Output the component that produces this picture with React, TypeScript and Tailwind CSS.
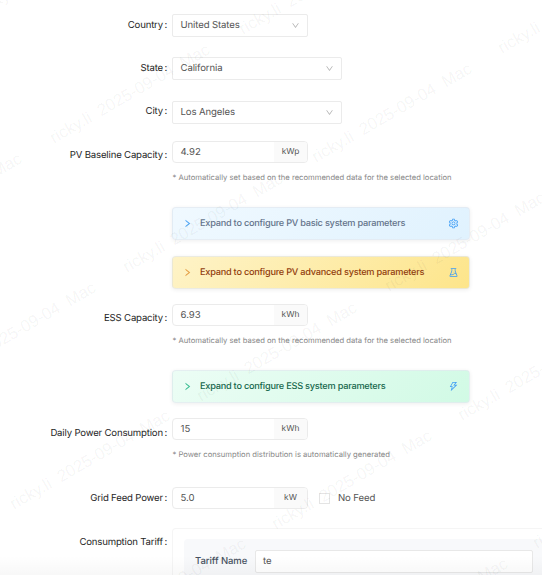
import type { ReactNode } from 'react';
import {
  AiOutlineDown,
  AiOutlineExperiment,
  AiOutlineRight,
  AiOutlineSetting,
  AiOutlineThunderbolt,
} from 'react-icons/ai';

function Row({ label, pad, height, children }: { label: string; pad: string; height: string; children: ReactNode }) {
  return (
    <div className={`flex items-start ${height}`}>
      <div className={`w-[172px] shrink-0 pr-[5px] text-right text-[9.6px] leading-[14px] tracking-[-0.18px] text-[#262626] ${pad}`}>
        {label}
        <span className="ml-[1.5px]">:</span>
      </div>
      <div className="min-w-0 flex-1">{children}</div>
    </div>
  );
}

function Select({ value, width }: { value: string; width: string }) {
  return (
    <div className={`flex h-[23px] items-center justify-between rounded-[2px] border border-[#ebebeb] bg-white pr-[7px] pl-[7.5px] text-[9.6px] tracking-[-0.12px] text-[#555555] ${width}`}>
      <span className="pt-[2px]">{value}</span>
      <AiOutlineDown className="size-[9px] text-[#b0b0b0]" />
    </div>
  );
}

function UnitInput({ value, unit }: { value: string; unit: string }) {
  return (
    <div className="flex h-[22px] w-[136px] overflow-hidden rounded-[4px] border border-[#ebebeb] bg-white text-[9.6px] text-[#555555]">
      <div className="flex flex-1 items-center pt-[2px] pl-[7.5px]">{value}</div>
      <div className="flex w-[33px] items-center justify-center bg-[#fafafa] text-[8.4px]">{unit}</div>
    </div>
  );
}

function Note({ children }: { children: ReactNode }) {
  return <p className="mt-[9px] pl-[0.5px] text-[7.65px] leading-[12px] whitespace-nowrap text-[#888888]">{children}</p>;
}

function Banner({ text, tone, arrow, icon }: { text: string; tone: string; arrow: string; icon: ReactNode }) {
  return (
    <div className={`flex h-[33px] w-[298px] items-center rounded-[4px] border border-[#e2e8f0]/70 pr-[10px] pl-[10px] text-[9.2px] font-medium shadow-[0_1px_4px_rgba(0,0,0,0.07)] ${tone}`}>
      <AiOutlineRight className={`mr-[8px] size-[9px] shrink-0 [stroke-width:30] ${arrow}`} />
      <span className="flex-1 tracking-[-0.24px] whitespace-nowrap">{text}</span>
      <span className="text-[11px] text-[#3b9bf5]">{icon}</span>
    </div>
  );
}

// Centre points of the repeated watermark
const marks = [
  [57, -34], [319, -15], [578, 4], [130, 94], [392, 113], [-58, 203],
  [203, 223], [465, 242], [16, 332], [277, 352], [538, 371],
  [90, 460], [352, 480], [613, 499], [166, 588], [428, 608],
];

function Watermark() {
  return (
    <div className="pointer-events-none absolute inset-0 overflow-hidden">
      {marks.map(([x, y]) => (
        <span
          key={`${x},${y}`}
          className="absolute w-[200px] -translate-x-1/2 -translate-y-1/2 -rotate-[30deg] text-center font-['Liberation_Sans',sans-serif] text-[16.8px] leading-[18px] whitespace-pre text-black/[0.05]"
          style={{ left: x, top: y }}
        >
          {'ricky.li  2025-09-04  Mac'}
        </span>
      ))}
    </div>
  );
}

export default function App() {
  return (
    <div className="relative h-[576px] w-[542px] overflow-hidden bg-white pt-[14px] font-['Inter',sans-serif] [text-rendering:geometricPrecision]">
      <Row label="Country" pad="pt-[5px]" height="h-[43px]">
        <Select value="United States" width="w-[136px]" />
      </Row>
      <Row label="State" pad="pt-[5px]" height="h-[44px]">
        <Select value="California" width="w-[170px]" />
      </Row>
      <Row label="City" pad="pt-[4px]" height="h-[40px]">
        <Select value="Los Angeles" width="w-[170px]" />
      </Row>
      <Row label="PV Baseline Capacity" pad="pt-[8px]" height="h-[163px]">
        <UnitInput value="4.92" unit="kWp" />
        <Note>* Automatically set based on the recommended data for the selected location</Note>
        <div className="mt-[23px] flex flex-col gap-4">
          <Banner
            text="Expand to configure PV basic system parameters"
            tone="bg-linear-135 from-[#f0f9ff] to-[#e0f2fe] text-[#64748b]"
            arrow="text-[#3b9bf5]"
            icon={<AiOutlineSetting />}
          />
          <Banner
            text="Expand to configure PV advanced system parameters"
            tone="bg-linear-135 from-[#fef3c7] to-[#fde58a] text-[#92400e]"
            arrow="text-[#e29335]"
            icon={<AiOutlineExperiment />}
          />
        </div>
      </Row>
      <Row label="ESS Capacity" pad="pt-[8px]" height="h-[114px]">
        <UnitInput value="6.93" unit="kWh" />
        <Note>* Automatically set based on the recommended data for the selected location</Note>
        <div className="mt-[23px]">
          <Banner
            text="Expand to configure ESS system parameters"
            tone="bg-linear-135 from-[#ecfdf5] to-[#d1fae5] text-[#17684d]"
            arrow="text-[#22b585]"
            icon={<AiOutlineThunderbolt />}
          />
        </div>
      </Row>
      <Row label="Daily Power Consumption" pad="pt-[9px]" height="h-[69px]">
        <UnitInput value="15" unit="kWh" />
        <Note>* Power consumption distribution is automatically generated</Note>
      </Row>
      <Row label="Grid Feed Power" pad="pt-[5px]" height="h-[41px]">
        <div className="flex items-center">
          <UnitInput value="5.0" unit="kW" />
          <span className="ml-[11px] size-[11px] border border-[#e4e4e4] bg-white" />
          <span className="ml-[8px] pt-[2px] text-[9.6px] tracking-[-0.12px] text-[#555555]">No Feed</span>
        </div>
      </Row>
      <Row label="Consumption Tariff" pad="pt-[8px]" height="h-[60px]">
        <div className="h-[60px] rounded-tl-[4px] border-t border-l border-[#f5f5f5] pt-[10px] pl-[11px]">
          <div className="flex h-[50px] items-start rounded-tl-[4px] bg-[#f8f9fb] pt-[11px] pl-[11px]">
            <span className="w-[60px] pt-[5px] text-[9.5px] leading-[14px] font-medium tracking-[-0.08px] whitespace-nowrap text-[#475160]">
              Tariff Name
            </span>
            <div className="flex h-[23px] w-[278px] items-center rounded-[2px] border border-[#e8e8e8] bg-white pt-[2px] pl-[7px] text-[9.6px] text-[#555555]">
              te
            </div>
          </div>
        </div>
      </Row>
      <Watermark />
      <div className="pointer-events-none absolute inset-x-0 bottom-0 h-5 border-b border-white bg-linear-to-b from-transparent to-black/[0.03]" />
    </div>
  );
}
